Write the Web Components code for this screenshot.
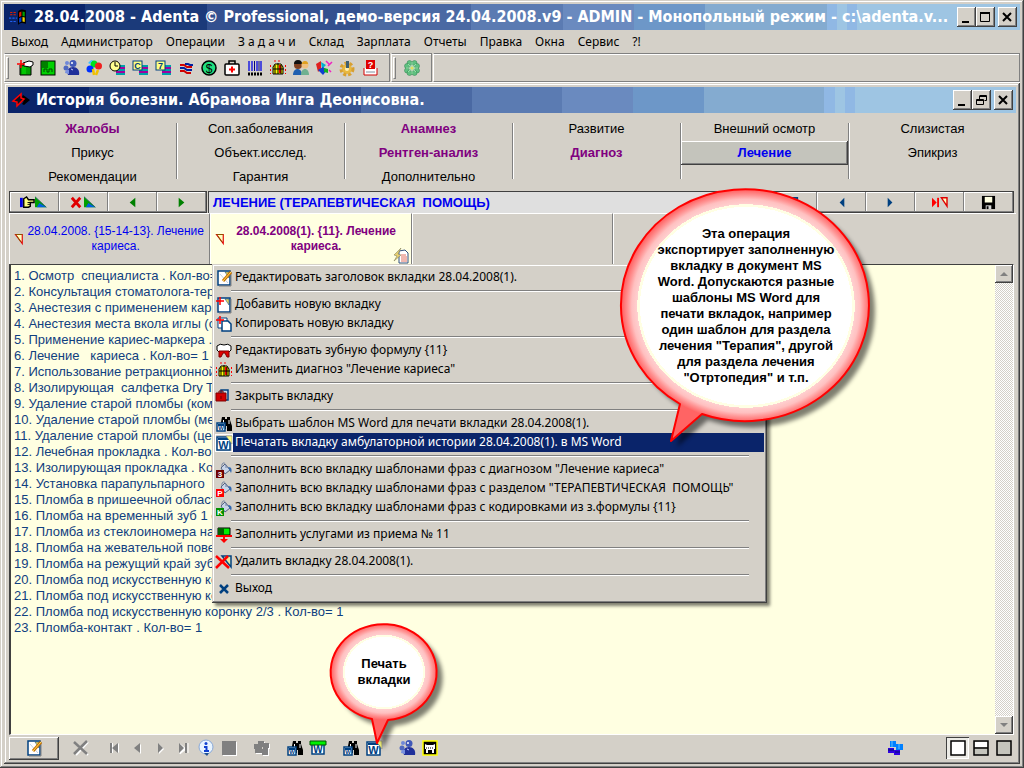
<!DOCTYPE html>
<html lang="ru">
<head>
<meta charset="utf-8">
<title>Adenta</title>
<style>
  body {
    margin: 0;
    height: 100vh;
    position: relative;
    overflow: hidden;
    background: #d4d0c8;
    color: #000;
    font: 12px/16px "Noto Sans", "DejaVu Sans Condensed", sans-serif;
    --face: #d4d0c8;
    --arial: "Liberation Sans", Arial, sans-serif;
  }
  context-menu { position: absolute; left: 212px; top: 264px; }
  call-out { position: absolute; pointer-events: none; }
  call-out.big { left: 612px; top: 180px; }
  call-out.small { left: 321px; top: 614px; }
</style>
</head>
<body>

<app-window>
  <title-bar slot="title" icon="win">28.04.2008 - Adenta © Professional, демо-версия 24.04.2008.v9 - ADMIN - Монопольный режим - c:\adenta.v...</title-bar>
  <menu-bar slot="menu" items="Выход|Администратор|Операции|З а д а ч и|Склад|Зарплата|Отчеты|Правка|Окна|Сервис|?!"></menu-bar>
  <tool-bar slot="tools"></tool-bar>
  <child-window>
    <title-bar slot="title" icon="adenta" child>История болезни. Абрамова Инга Деонисовна.</title-bar>
    <section-tabs></section-tabs>
    <nav-row>ЛЕЧЕНИЕ (ТЕРАПЕВТИЧЕСКАЯ&nbsp; ПОМОЩЬ)</nav-row>
    <visit-tabs></visit-tabs>
    <memo-box></memo-box>
    <status-bar></status-bar>
  </child-window>
</app-window>

<context-menu></context-menu>

<call-out class="big" rx="124" ry="116" ring="18" tail="-66,98 -44,108 -75,135">Эта операция<br>экспортирует заполненную<br>вкладку в документ MS<br>Word. Допускаются разные<br>шаблоны MS Word для<br>печати вкладок, например<br>один шаблон для раздела<br>лечения "Терапия", другой<br>для раздела лечения<br>"Отртопедия" и т.п.</call-out>
<call-out class="small" rx="53" ry="48" ring="14" tail="-12,47 4,48 -7,71">Печать<br>вкладки</call-out>

<script>
// Small shared shapes, all on a 16x16 grid
const word = (x, y, s) => `<g transform="translate(${x} ${y})"><rect width="${s}" height="${s}" fill="#fff" stroke="#004080" stroke-width="1.5"/><rect x="1" y="1" width="${s - 2}" height="2" fill="#004080"/><text x="${s / 2}" y="${s - 1}" font-family="Liberation Sans" font-weight="bold" font-size="${s - 2}" text-anchor="middle" fill="#004080">W</text></g>`;
const binoc = '<path d="M6 1h3v2h2v-2h3v3l2 6v5h-5v-5h-1v3h-5v-7z" fill="#000"/><path d="M7.500 4v3M13 4v4" stroke="#fff"/>';
const users = '<circle cx="10" cy="3.500" r="3.500" fill="#4058b8"/><path d="M5 15c-2-5 1-8 5-8s7 3 6 8z" fill="#20309a"/><circle cx="4" cy="3" r="2" fill="#7088d8"/><circle cx="3" cy="8" r="2.500" fill="#5068c0"/><path d="M2 13c0-3 2-4 4-3v4z" fill="#7890e0"/><circle cx="9" cy="3" r="1" fill="#fff"/><path d="M8 9l2 1" stroke="#c8d0ff"/>';
const page = '<path d="M2 1h12v14h-12z" fill="#fff" stroke="#004080" stroke-width="1.500"/><path d="M9 2h4v6z" fill="#e8d860" stroke="#004080" stroke-width=".500"/><path d="M15 2v14h-12" fill="none" stroke="#808080"/>';
const bucket = (c, t) => `<path d="M5 6l4-4 5 6-5 4z" fill="#c8d4e8" stroke="#506080"/><path d="M6 5c-1-6 5-5 4 1" fill="none" stroke="#7080a0"/><path d="M12 5c4 0 4 3 3 6l-2-4z" fill="#3068b0"/><rect y="8" width="8" height="8" fill="${c}"/><text x="4" y="15" font-family="Liberation Sans" font-weight="bold" font-size="8" text-anchor="middle" fill="#fff">${t}</text>`;
const stripes = '<path d="M7 5h9v2h-9zM7 9h9v2h-9zM7 13h9v2h-9z" fill="#00a0a8"/><path d="M7 7h9v2h-9zM7 11h9v2h-9z" fill="#a000a0"/>';
const badge = t => stripes + `<rect x="1" y="1" width="9" height="9" fill="#ffff80" stroke="#004080"/><text x="5.5" y="9" font-family="Liberation Sans" font-weight="bold" font-size="9" text-anchor="middle" fill="#004080">${t}</text>`;
const grille = '<path d="M3 14v-7l2-3h6l2 3v7z" fill="#ffff00" stroke="#000"/><path d="M9 5h2v8h-2z" fill="#f00"/><path d="M8 3v11M3 9h11M5 5v9M11 5v9" stroke="#000"/><path d="M.500 5v9M15.500 5v9M4 1h8" stroke="#f00" stroke-dasharray="2 2"/>';
const tri = '<path d="M0 2v12h13z" fill="#00a000"/><path d="M5 9l8 5h-11z" fill="#0060e0"/><path d="M0 2l13 12" stroke="#206060"/>';

const ICONS = {
  win: '<path d="M8 3c2-2 4-2 7-1v12c-3-1-5-1-7 1z" fill="#000"/><path d="M9 4l2-1v4l-2 1z" fill="#e02000"/><path d="M12 3l2 .500v4l-2-.500z" fill="#00a000"/><path d="M9 9l2-1v4l-2 1z" fill="#0040e0"/><path d="M12 8l2 .500v4l-2-.500z" fill="#f0d000"/><path d="M1 4h6M1 6h6" stroke="#e02000" stroke-dasharray="2 1"/><path d="M0 9h7M1 12h6" stroke="#2060f0" stroke-dasharray="2 1"/>',
  adenta: '<path d="M10 3l7 5-6 5-2-1 2-3-4 2 1-4z" fill="#000"/><path d="M0 9l8-7v4l3 1-7 7v-4z" fill="#101020" stroke="#f00" stroke-width="1.500"/>',
  exit: '<path d="M3 5h11v10h-11z" fill="#00a000" stroke="#000"/><path d="M5 7h4v7h-4z" fill="#00c800"/><path d="M6 3l6-2 4 1v3l-3 2-6-1z" fill="#fff" stroke="#000"/><path d="M0 4h8M4 0v8" stroke="#f00" stroke-width="1.500"/>',
  green: '<rect x="1" y="1" width="14" height="14" fill="#00d000" stroke="#000"/><path d="M2 2h6v6h-6z" fill="#008000"/><path d="M4 12v-3h3v3h2v-3h3v3" stroke="#004800" fill="none"/>',
  users,
  balloons: '<circle cx="8" cy="4" r="3.500" fill="#00e020"/><circle cx="4" cy="9" r="3.500" fill="#0030ff"/><path d="M4 1a4 4 0 0 1 3-1l-3 4-2-1z" fill="#40c0ff"/><circle cx="12.500" cy="6" r="3.500" fill="#f02020"/><path d="M7 9l1 6M12 10l-2 5" stroke="#f0c000" stroke-width="2.500"/>',
  clock: stripes + '<circle cx="6" cy="6" r="5" fill="#ffff90" stroke="#000"/><path d="M6 2v4h3" stroke="#000" fill="none"/>',
  c: badge('C'), seven: badge('7'),
  waves: '<path d="M2 5h4l3 2h5M2 11h4l3 2h4" stroke="#d00000" stroke-width="2" fill="none"/><path d="M2 8h4l3 2h5M7 4h3l2 1h3" stroke="#0020a0" stroke-width="2" fill="none"/>',
  dollar: '<circle cx="8" cy="8" r="7" fill="#20e080" stroke="#000" stroke-width="1.500"/><text x="8" y="12.500" font-family="Liberation Sans" font-size="12" text-anchor="middle">$</text>',
  aid: '<path d="M5 4v-3h6v3" fill="none" stroke="#000" stroke-width="1.500"/><rect x="1" y="4" width="14" height="11" rx="1" fill="#fff" stroke="#000" stroke-width="1.500"/><path d="M8 6.500v6M5 9.500h6" stroke="#f00" stroke-width="2"/>',
  barcode: '<path d="M2 1v10M5 1v10M10 1v10M14 1v10" stroke="#2020e0" stroke-width="1.500"/><path d="M7.500 1v10M12 1v10" stroke="#000080"/><path d="M1 14h14" stroke="#000" stroke-width="3" stroke-dasharray="2 1"/>',
  grille,
  people: '<circle cx="5" cy="5" r="4" fill="#804020"/><path d="M1 4a4 4 0 0 1 8 0z" fill="#101010"/><path d="M0 15c0-8 9-8 9 0z" fill="#2060b0"/><circle cx="12" cy="5" r="3.500" fill="#f0c080"/><path d="M9 4a3 3 0 0 1 6 0z" fill="#e0a020"/><path d="M8 15c0-8 8-8 8 0z" fill="#70b090"/>',
  cube: '<path d="M0 4l5-3v8l-3 3z" fill="#e02020"/><path d="M5 2l5 3-4 4z" fill="#00b0d0"/><path d="M2 10l5-3 4 3-4 5z" fill="#1040d0"/><path d="M8 8l4 1v4l-4-1z" fill="#10b020"/><path d="M10 1l3 3M12 6l4-4M13 10l2 2" stroke="#f020c0" stroke-width="1.500"/>',
  gear: '<circle cx="8" cy="9" r="5" fill="#e8b840"/><circle cx="8" cy="9" r="6" fill="none" stroke="#d8a030" stroke-width="3" stroke-dasharray="3 2"/><circle cx="8" cy="9" r="2" fill="#fff0b0"/><path d="M7 1h3v7h-3z" fill="#406070"/>',
  ask: '<path d="M2 8v7h13v-7" fill="#fff" stroke="#d00000"/><rect x="4" y="0" width="9" height="9" fill="#e00000"/><text x="8.500" y="8" font-family="Liberation Sans" font-size="9" font-weight="bold" fill="#fff" text-anchor="middle">?</text><path d="M4 12h9" stroke="#8090a0"/>',
  clover: '<g fill="#60c080" stroke="#308050" stroke-width=".500"><circle cx="5.500" cy="3" r="2.500"/><circle cx="10.500" cy="3" r="2.500"/><circle cx="3" cy="6" r="2.500"/><circle cx="13" cy="6" r="2.500"/><circle cx="3" cy="10.500" r="2.500"/><circle cx="13" cy="10.500" r="2.500"/><circle cx="5.500" cy="13" r="2.500"/><circle cx="10.500" cy="13" r="2.500"/></g><path d="M4 4l8 8M12 4l-8 8M8 2v12M2 8h12" stroke="#98e0a8"/><circle cx="8" cy="8" r="1.500" fill="#e0e060"/>',
  hand: '<path d="M0 3h3v10h-3z" fill="#0000e0"/><path d="M4 4l3-2 2 3h6v3h-4v4l-2 1h-5z" fill="#ffff80" stroke="#000" stroke-width="1.500"/><path d="M8 8h3M8 10h3" stroke="#000"/>',
  tri,
  redx: '<path d="M3 3l9 10M12 3l-9 10" stroke="#e00000" stroke-width="3"/>',
  gl: '<path d="M11 3v10l-6-5z" fill="#008000"/>', gr: '<path d="M5 3v10l6-5z" fill="#008000"/>',
  bl: '<path d="M11 3v10l-5-5z" fill="#004080"/>', br: '<path d="M5 3v10l5-5z" fill="#004080"/>',
  add: '<path d="M2 3h11v11h-11z" fill="#fff" stroke="#004080" stroke-width="2"/><path d="M9 4h3v6z" fill="#e8d860" stroke="#004080"/>',
  last: '<path d="M0 3v10l5-5z" fill="#f00"/><path d="M6.500 3v10" stroke="#f00" stroke-width="2"/><path d="M10 3h6v9z" fill="#ffffc0" stroke="#e00000" stroke-width="1.500"/>',
  save: '<path d="M1 1h14v14h-14z" fill="#000"/><path d="M4 2h8v6h-8z" fill="#ffffe1"/><path d="M5 11h6v4h-6z" fill="#d8d8d8"/><path d="M6 12h2v3h-2z" fill="#000"/>',
  mark: '<path d="M2 2h9v12z" fill="#ffffc0" stroke="#e00000" stroke-width="1.500"/><path d="M2 2h9M4 4l5 8" stroke="#707000"/>',
  sheet: '<path d="M6 3l6-1 3 3v10h-9z" fill="#fff" stroke="#305080"/><path d="M8 7h5M8 9h6M8 11h6M8 13h6" stroke="#e07060"/><path d="M8 0l-7 7 3 1-3 5 7-6-3-1z" fill="#e8d070" stroke="#707050" stroke-width=".500"/>',
  edit: page + '<path d="M4 4l8 9" stroke="#c0d0e8"/><path d="M7 11l8-9" stroke="#c87000" stroke-width="3"/><path d="M7 11l8-9" stroke="#ffe060"/>',
  addpage: page + '<path d="M0 4h8M4 0v8" stroke="#f00" stroke-width="1.500"/>',
  copy: '<path d="M2 2h9v10h-9z" fill="#fff" stroke="#004080"/><path d="M6 5h6l3 3v7h-9z" fill="#fff" stroke="#004080" stroke-width="1.500"/><path d="M0 4h8M4 0v8" stroke="#f00" stroke-width="1.500"/>',
  tooth: '<path d="M1 3q3-3 7-1q4-2 7 1v4l-2 2h-10l-2-2z" fill="#fff" stroke="#000"/><path d="M3 8h10v6h-2l-2-4h-2l-2 4h-2z" fill="#e00000" stroke="#800000"/>',
  close: '<path d="M5 1h7v10h-7z" fill="#c8d8e0" stroke="#004080" stroke-width="1.500"/><path d="M0 4h10v8h-10z" fill="#d00000" stroke="#800000"/><path d="M3 4v-2h4v2M5 7v3" stroke="#700000" fill="none"/>',
  binword: binoc + word(1, 7, 8),
  word: word(1, 2, 13) + '<path d="M10 1h6v8z" fill="#ffff80" stroke="#808080" stroke-width=".500"/>',
  greenword: word(2, 2, 12) + '<path d="M0 1h16v4h-16z" fill="#00f000" stroke="#005000"/>',
  b3: bucket('#700000', '3'), bp: bucket('#f00', 'P'), bk: bucket('#009000', 'K'),
  services: '<path d="M2 1h12v7h-12z" fill="#00f000" stroke="#000"/><path d="M2 1h6v7h-6z" fill="#006000"/><path d="M0 9h16M8 8v6" stroke="#f00" stroke-width="2"/><path d="M4 12h8l-4 4z" fill="#f00"/>',
  del: '<path d="M6 2h9v11z" fill="#e8e8a0" stroke="#004080" stroke-width="1.500"/><path d="M0 2l13 12M12 2l-12 12" stroke="#f00" stroke-width="2.500"/>',
  bluex: '<path d="M4 4l8 8M12 4l-8 8" stroke="#004080" stroke-width="2.500"/>',
  grayx: '<path d="M2 3l13 12M15 2l-12 13" stroke="#fff" stroke-width="2"/><path d="M1 2l13 12M14 1l-13 13" stroke="#808080" stroke-width="2.500"/>',
  first: '<path d="M5 3h2v10h-2zM13 3v10l-5-5z" fill="#fff"/><path d="M4 3h2v10h-2zM12 3v10l-6-5z" fill="#808080"/>',
  prev: '<path d="M12 4v10l-5-5z" fill="#fff"/><path d="M11 3v10l-6-5z" fill="#808080"/>',
  next: '<path d="M7 4v10l5-5z" fill="#fff"/><path d="M6 3v10l5-5z" fill="#808080"/>',
  end: '<path d="M13 3v10M5 4v10l6-5z" fill="#fff" stroke="#fff"/><path d="M10 3h2v10h-2zM4 3v10l5-5z" fill="#808080"/>',
  info: '<circle cx="8" cy="7" r="7" fill="#e8f4ff" stroke="#88a8d8"/><path d="M6 13h5l-2 3z" fill="#205090"/><circle cx="8" cy="3.500" r="1.500" fill="#1040d0"/><path d="M6 7h2.500v4M6 11h5" fill="none" stroke="#1040d0" stroke-width="2"/>',
  stop: '<path d="M2 2h14v14h-14z" fill="#fff"/><path d="M1 1h14v14h-14z" fill="#808080"/>',
  blob: '<path d="M5 2h6v2h5v5h-1v7h-6v-2h-7v-4h-1v-5h4z" fill="#fff"/><path d="M4 1h6v2h5v5h-1v7h-6v-2h-7v-4h-1v-5h4z" fill="#808080"/><path d="M8 7h1v2h-1z" fill="#d4d0c8"/>',
  jaw: '<rect x="1" y="1" width="14" height="14" fill="#000" stroke="#ff0" stroke-width="1.500"/><path d="M3 4l2 1h6l2-1v5h-1v4h-2v-3h-4v3h-2v-4h-1z" fill="#fff"/><path d="M4 8h8" stroke="#000" stroke-dasharray="1 1"/>',
  blocks: '<path d="M3 1h6v6h-6zM9 4h7v6h-7z" fill="#0080ff"/><path d="M1 8h6v5h-6zM7 10h6v5h-6z" fill="#3000e0"/><path d="M1 10h6M8 12h5" stroke="#001070"/><path d="M5 1v6M12 4v5" stroke="#60c0ff"/>',
  full: '<rect x="1" y="1" width="14" height="14" fill="#fff" stroke="#000" stroke-width="1.500"/>',
  half: '<rect x="1" y="1" width="14" height="14" fill="#c4c4bc" stroke="#000" stroke-width="1.500"/><path d="M2 2h12v5h-12z" fill="#fff"/><path d="M1 8h14" stroke="#000" stroke-width="1.500"/>',
  none: '<rect x="1" y="1" width="14" height="14" fill="#c4c4bc" stroke="#000" stroke-width="1.500"/>',
};

const icon = (name, size = 16) => `<svg width="${size}" height="${size}" viewBox="0 0 16 16" aria-hidden="true">${ICONS[name]}</svg>`;

// Reset used in every shadow root
const BASE = `
  :host { display: block; box-sizing: border-box; }
  * { box-sizing: border-box; }
  svg { display: block; flex: none; overflow: visible; }
  button { font: inherit; color: inherit; background: none; border: 0; margin: 0; padding: 0; }
  .raised { background: var(--face); box-shadow: inset -1px -1px #404040, inset 1px 1px #fff, inset -2px -2px #808080; }
`;

class AdentaElement extends HTMLElement {
  constructor() {
    super();
    this.attachShadow({ mode: 'open' });
  }

  connectedCallback() {
    this.shadowRoot.innerHTML = `<style>${BASE}${this.styles()}</style>${this.render()}`;
  }

  styles() { return ''; }
  render() { return '<slot></slot>'; }
}

class AppWindow extends AdentaElement {
  styles() {
    return `
      :host {
        height: 100%; padding: 4px; display: flex; flex-direction: column; background: var(--face);
        box-shadow: inset -1px -1px #404040, inset 1px 1px #d4d0c8, inset -2px -2px #808080, inset 2px 2px #fff;
      }
      ::slotted(child-window) { flex: 1; min-height: 0; }
    `;
  }
  render() { return '<slot name="title"></slot><slot name="menu"></slot><slot name="tools"></slot><slot></slot>'; }
}

class ChildWindow extends AdentaElement {
  styles() {
    return `
      :host {
        padding: 4px; display: flex; flex-direction: column;
        box-shadow: inset -1px -1px #404040, inset 1px 1px #d4d0c8, inset -2px -2px #808080, inset 2px 2px #fff;
      }
      ::slotted(memo-box) { flex: 1; min-height: 0; }
    `;
  }
  render() { return '<slot name="title"></slot><slot></slot>'; }
}

class TitleBar extends AdentaElement {
  styles() {
    return `
      :host {
        display: flex; align-items: center; height: 26px; padding: 0 3px 0 5px; flex: none; color: #fff;
        font: bold 16px/26px "DejaVu Sans Condensed", "DejaVu Sans", sans-serif;
        background: linear-gradient(90deg, #0a246a 8%, #1b3a7a 8% 20%, #33508f 20% 35%, #4a69a3 35% 46%, #5b7bb2 46% 55%,
          #6a8abf 55% 62%, #6d97c8 62% 69%, #84abd0 69% 81%, #90b8e4 81% 82%, #9ec5e3 82% 83%, #90b8e4 83% 84%, #9ec5e3 84%);
      }
      .text { flex: 1; min-width: 0; overflow: hidden; white-space: nowrap; margin-left: 7px; }
      .buttons { display: flex; }
      button { width: 19px; height: 20px; padding: 2px; display: grid; place-items: center; }
      button:last-child { margin-left: 3px; }
    `;
  }
  render() {
    const child = this.hasAttribute('child');
    const middle = child
      ? '<path d="M5.500 2.500h7v5h-2M5.500 3.500h7M5.500 3v3M2.500 6.500h7v5h-7zM3 7.500h7" fill="none" stroke="#000"/>'
      : '<path d="M2.500 2.500h9v9h-9z" fill="none" stroke="#000"/><path d="M2 3h10" stroke="#000" stroke-width="2"/>';
    const box = p => `<svg width="15" height="15" viewBox="0 0 15 15">${p}</svg>`;
    return `
      ${icon(this.getAttribute('icon'), child ? 16 : 18)}
      <span class="text"><slot></slot></span>
      <div class="buttons">
        <button class="raised" aria-label="Свернуть">${box('<path d="M3 11h7v2h-7z"/>')}</button>
        <button class="raised" aria-label="Развернуть">${box(middle)}</button>
        <button class="raised" aria-label="Закрыть">${box('<path d="M3 3l8 8M11 3l-8 8" stroke="#000" stroke-width="2"/>')}</button>
      </div>
    `;
  }
}

class MenuBar extends AdentaElement {
  styles() {
    return `
      :host { height: 23px; flex: none; }
      nav { display: flex; gap: 13px; padding: 0 7px; }
      button { line-height: 23px; white-space: nowrap; }
    `;
  }
  render() {
    return `<nav>${this.getAttribute('items').split('|').map(t => `<button>${t}</button>`).join('')}</nav>`;
  }
}

class ToolBar extends AdentaElement {
  styles() {
    return `
      :host { height: 30px; flex: none; display: flex; gap: 1px; border-bottom: 1px solid #fff; }
      .band {
        display: flex; align-items: center; padding: 0 8px 0 1px; border: 1px solid #808080;
        border-left-color: #fff; box-shadow: inset 0 1px #fff;
      }
      .rest { flex: 1; }
      .grip { width: 3px; height: 22px; margin-right: 4px; border: 1px solid; border-color: #fff #808080 #808080 #fff; }
      button { width: 23px; height: 22px; display: grid; place-items: center; }
    `;
  }
  render() {
    const names = ['exit', 'green', 'users', 'balloons', 'clock', 'c', 'seven', 'waves', 'dollar', 'aid', 'barcode', 'grille', 'people', 'cube', 'gear', 'ask'];
    const band = list => `<div class="band"><i class="grip"></i>${list.map(n => `<button aria-label="${n}">${icon(n)}</button>`).join('')}</div>`;
    return band(names) + band(['clover']) + '<div class="band rest"></div>';
  }
}

// a leading * marks a filled section, a leading > marks the open one
const SECTIONS = [
  ['*Жалобы', 'Прикус', 'Рекомендации'],
  ['Соп.заболевания', 'Объект.исслед.', 'Гарантия'],
  ['*Анамнез', '*Рентген-анализ', 'Дополнительно'],
  ['Развитие', '*Диагноз'],
  ['Внешний осмотр', '>Лечение'],
  ['Слизистая', 'Эпикриз'],
];

class SectionTabs extends AdentaElement {
  styles() {
    return `
      :host { display: grid; grid-template-columns: repeat(6, 1fr); padding: 4px 0 2px; flex: none; font: 13px/24px var(--arial); }
      .col { display: flex; flex-direction: column; min-height: 72px; padding-left: 1px; }
      .col + .col {
        background: linear-gradient(90deg, #808080 50%, #fff 50%) left 6px / 2px 56px no-repeat;
      }
      button { height: 24px; }
      .filled { color: #800080; font-weight: bold; }
      .open { color: #0000f0; font-weight: bold; background: #c4c4bc; }
    `;
  }
  render() {
    const cls = { '*': 'filled', '>': 'open raised' };
    return SECTIONS.map(col => `<div class="col">${col.map(t =>
      `<button class="${cls[t[0]] || ''}">${t.replace(/^[*>]/, '')}</button>`).join('')}</div>`).join('');
  }
}

class NavRow extends AdentaElement {
  styles() {
    return `
      :host { display: flex; gap: 1px; height: 22px; margin: 0 2px 0 1px; flex: none; }
      .group { display: flex; border: 1px solid #404040; }
      button { width: 49px; display: flex; align-items: center; justify-content: center; }
      .raised { box-shadow: inset -1px -1px #808080, inset 1px 1px #fff; }
      .name {
        flex: 1; padding: 0 4px; border: 1px solid #404040; border-width: 1px 0 0 1px; background: #dfdfdf;
        color: #0000f0; font: bold 13px/22px var(--arial); white-space: pre; overflow: hidden;
      }
    `;
  }
  render() {
    const btn = (...n) => `<button class="raised" aria-label="${n[0]}">${n.map(x => icon(x, x === 'tri' ? 14 : 15)).join('')}</button>`;
    return `
      <div class="group">${btn('hand', 'tri')}${btn('redx', 'tri')}${btn('gl')}${btn('gr')}</div>
      <div class="name"><slot></slot></div>
      <div class="group">${btn('edit')}${btn('add')}${btn('bl')}${btn('br')}${btn('last')}${btn('save')}</div>
    `;
  }
}

class VisitTabs extends AdentaElement {
  styles() {
    return `
      :host { display: grid; grid-template-columns: repeat(5, minmax(0, 1fr)); height: 51px; padding-left: 1px; flex: none; font: 12px/15px var(--arial); }
      .tab {
        display: flex; align-items: center; padding: 0 4px; border-right: 1px solid #808080;
        border-left: 1px solid #fff; border-top: 1px solid #fff; color: #0000f0;
      }
      .tab:last-child { border-right: 0; }
      .tab span { flex: 1; white-space: nowrap; text-align: center; }
      .tab svg:last-child { align-self: flex-end; }
      .current { background: #ffffe1; color: #800080; font-weight: bold; padding-right: 2px; }
      .current span { margin-right: -12px; }
    `;
  }
  render() {
    return `
      <button class="tab">${icon('mark', 12)}<span>28.04.2008. {15-14-13}. Лечение<br>кариеса.</span></button>
      <button class="tab current">${icon('mark', 12)}<span>28.04.2008(1). {11}. Лечение<br>кариеса.</span>${icon('sheet')}</button>
      <div class="tab"></div><div class="tab"></div><div class="tab"></div>
    `;
  }
}

const SERVICES = `1. Осмотр  специалиста . Кол-во= 1
2. Консультация стоматолога-терапевта
3. Анестезия с применением карпулы
4. Анестезия места вкола иглы (спрей)
5. Применение кариес-маркера . Кол-во= 1
6. Лечение   кариеса . Кол-во= 1
7. Использование ретракционной нити
8. Изолирующая  салфетка Dry Tips
9. Удаление старой пломбы (композит)
10. Удаление старой пломбы (металл)
11. Удаление старой пломбы (цемент)
12. Лечебная прокладка . Кол-во= 1
13. Изолирующая прокладка . Кол-во= 1
14. Установка парапульпарного  штифта
15. Пломба в пришеечной области
16. Пломба на временный зуб 1 ед.
17. Пломба из стеклоиномера на зуб
18. Пломба на жевательной поверхности
19. Пломба на режущий край зуба
20. Пломба под искусственную коронку
21. Пломба под искусственную коронку
22. Пломба под искусственную коронку 2/3 . Кол-во= 1
23. Пломба-контакт . Кол-во= 1`;

class MemoBox extends AdentaElement {
  styles() {
    return `
      :host { display: flex; margin: 0 2px 0 1px; background: #ffffe1; border: 1px solid; border-color: #404040 #fff #fff #404040; border-left-width: 2px; }
      textarea {
        flex: 1; display: block; margin: 0; border: 0; outline: 0; resize: none; overflow: hidden; padding: 3px;
        background: none; color: #104080; font: 13px/16px var(--arial); white-space: pre;
      }
      .scroll {
        width: 18px; display: flex; flex-direction: column; justify-content: space-between;
        background: repeating-conic-gradient(#fff 0 25%, #d4d0c8 0 50%) 0 0 / 2px 2px;
      }
      button { width: 18px; height: 18px; display: grid; place-items: center; }
    `;
  }
  render() {
    const arrow = d => `<svg width="10" height="6" viewBox="0 0 10 6"><path d="${d}" fill="#808080"/></svg>`;
    return `
      <textarea aria-label="Лечение" readonly>${SERVICES}</textarea>
      <div class="scroll">
        <button class="raised" aria-label="Вверх">${arrow('M1 5h8l-4-4z')}</button>
        <button class="raised" aria-label="Вниз">${arrow('M1 1h8l-4 4z')}</button>
      </div>
    `;
  }
}

class StatusBar extends AdentaElement {
  styles() {
    return `
      :host { display: flex; align-items: center; height: 25px; padding: 1px 1px 0 1px; flex: none; }
      button { width: 23px; height: 22px; display: grid; place-items: center; flex: none; }
      .edit { width: 50px; height: 23px; margin-right: 10px; }
      .gap { margin-left: 10px; }
      .fill { flex: 1; }
      .blocks { margin-right: 40px; }
      .pressed { background: #ecebe6; box-shadow: inset 1px 1px #404040, inset -1px -1px #fff; }
    `;
  }
  render() {
    const btn = (n, c = '') => `<button class="${c}" aria-label="${n}">${icon(n)}</button>`;
    return btn('edit', 'edit raised') + btn('grayx') + btn('first', 'gap') +
      ['prev', 'next', 'end', 'info', 'stop'].map(n => btn(n)).join('') +
      btn('blob', 'gap') + btn('binword', 'gap') + btn('greenword') + btn('binword', 'gap') + btn('word') +
      btn('users', 'gap') + btn('jaw') + '<span class="fill"></span>' +
      btn('blocks', 'blocks') + btn('full', 'pressed') + btn('half') + btn('none');
  }
}

// null is a separator
const MENU = [
  ['edit', 'Редактировать заголовок вкладки 28.04.2008(1).'], null,
  ['addpage', 'Добавить новую вкладку'],
  ['copy', 'Копировать новую вкладку'], null,
  ['tooth', 'Редактировать зубную формулу {11}'],
  ['grille', 'Изменить диагноз "Лечение кариеса"'], null,
  ['close', 'Закрыть вкладку'], null,
  ['binword', 'Выбрать шаблон MS Word для печати вкладки 28.04.2008(1).'],
  ['word', 'Печатать вкладку амбулаторной истории 28.04.2008(1). в MS Word', true], null,
  ['b3', 'Заполнить всю вкладку шаблонами фраз с диагнозом "Лечение кариеса"'],
  ['bp', 'Заполнить всю вкладку шаблонами фраз с разделом "ТЕРАПЕВТИЧЕСКАЯ&nbsp; ПОМОЩЬ"'],
  ['bk', 'Заполнить всю вкладку шаблонами фраз с кодировками из з.формулы {11}'], null,
  ['services', 'Заполнить услугами из приема № 11'], null,
  ['del', 'Удалить вкладку 28.04.2008(1).'], null,
  ['bluex', 'Выход'],
];

class ContextMenu extends AdentaElement {
  styles() {
    return `
      :host {
        min-width: 555px; padding: 4px 3px 5px 4px; background: var(--face);
        box-shadow: inset -1px -1px #404040, inset 1px 1px #d4d0c8, inset -2px -2px #808080, inset 2px 2px #fff, 3px 3px 3px rgba(0, 0, 0, .5);
      }
      button { display: flex; align-items: center; width: 100%; height: 19px; gap: 1px; text-align: left; white-space: nowrap; }
      span { flex: 1; padding: 0 2px 2px; line-height: 17px; }
      .hot svg { box-shadow: 0 0 0 1px #fff; }
      .hot span { background: #0a246a; color: #fff; }
      hr { height: 2px; margin: 3px 15px; border: 0; border-top: 1px solid #808080; border-bottom: 1px solid #fff; }
    `;
  }
  render() {
    return MENU.map(m => m
      ? `<button role="menuitem" class="${m[2] ? 'hot' : ''}">${icon(m[0])}<span>${m[1]}</span></button>`
      : '<hr>').join('');
  }
}

// Speech balloon: an ellipse with a tail, tail points are relative to its centre
class CallOut extends AdentaElement {
  styles() {
    return `
      :host { display: grid; justify-items: center; }
      svg, .text { grid-area: 1 / 1; }
      .text {
        z-index: 1; height: ${this.getAttribute('ry') * 2 + 20}px; display: grid; place-items: center;
        text-align: center; white-space: nowrap; font: bold 13px/16px var(--arial);
      }
    `;
  }
  render() {
    const rx = +this.getAttribute('rx');
    const ry = +this.getAttribute('ry');
    const cx = rx + 10;
    const cy = ry + 10;
    const inner = 1 - this.getAttribute('ring') / rx;
    const at = k => inner + (1 - inner) * k;
    const [a, b, tip] = this.getAttribute('tail').split(' ').map(p => p.split(',').map(Number));
    const d = `M${cx + a[0]} ${cy + a[1]}A${rx} ${ry} 0 1 1 ${cx + b[0]} ${cy + b[1]}L${cx + tip[0]} ${cy + tip[1]}Z`;
    return `
      <svg width="${cx * 2}" height="${cy + tip[1] + 20}">
        <defs>
          <radialGradient id="g" gradientUnits="userSpaceOnUse" cx="0" cy="0" r="${rx}" gradientTransform="translate(${cx} ${cy}) scale(1 ${ry / rx})">
            <stop offset="${at(0)}" stop-color="#fff"/><stop offset="${at(0)}" stop-color="#ffffe4"/>
            <stop offset="${at(.15)}" stop-color="#ffffe4"/><stop offset="${at(.15)}" stop-color="#ffd0d0"/>
            <stop offset="${at(.45)}" stop-color="#ffc0c0"/><stop offset="${at(.7)}" stop-color="#ff9494"/>
            <stop offset="1" stop-color="#ff6464"/>
          </radialGradient>
          <filter id="s" x="-20%" y="-20%" width="150%" height="150%"><feGaussianBlur stdDeviation="2"/></filter>
        </defs>
        <path d="${d}" transform="translate(6 6)" fill="#000" opacity=".5" filter="url(#s)"/>
        <path d="${d}" fill="url(#g)" stroke="#f00" stroke-width="2" stroke-linejoin="round"/>
      </svg>
      <div class="text"><span><slot></slot></span></div>
    `;
  }
}

customElements.define('app-window', AppWindow);
customElements.define('child-window', ChildWindow);
customElements.define('title-bar', TitleBar);
customElements.define('menu-bar', MenuBar);
customElements.define('tool-bar', ToolBar);
customElements.define('section-tabs', SectionTabs);
customElements.define('nav-row', NavRow);
customElements.define('visit-tabs', VisitTabs);
customElements.define('memo-box', MemoBox);
customElements.define('status-bar', StatusBar);
customElements.define('context-menu', ContextMenu);
customElements.define('call-out', CallOut);
</script>
</body>
</html>
